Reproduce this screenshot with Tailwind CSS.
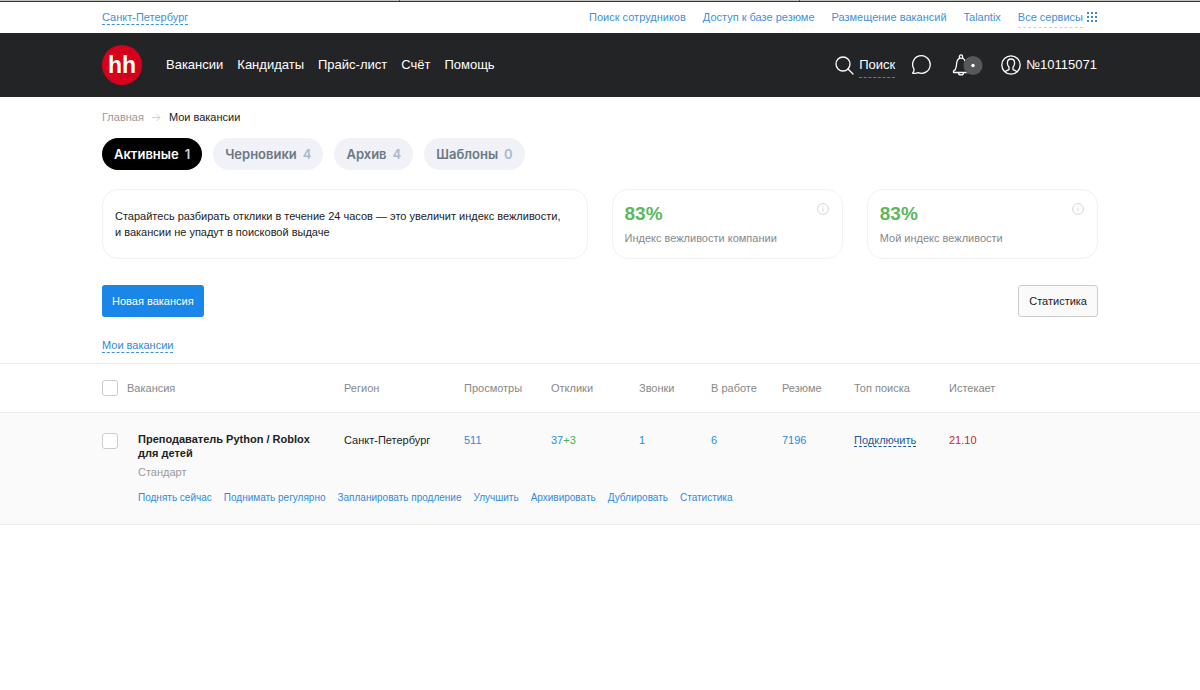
<!DOCTYPE html>
<html lang="ru">
<head>
<meta charset="utf-8">
<meta name="viewport" content="width=device-width, initial-scale=1">
<title>Мои вакансии</title>
<script src="https://cdn.jsdelivr.net/npm/@tailwindcss/browser@4"></script>
</head>
<body class="min-h-screen bg-white font-['Liberation_Sans',Arial,sans-serif] text-[11px] leading-4 text-[#222]">
<div class="flex h-[2px] border-b border-[#333] bg-[#c4c4c0]">
  <span class="w-1/3 border-r border-[#666]"></span><span class="w-1/3 border-r border-[#666]"></span>
</div>

<div class="mx-auto flex h-[31px] max-w-[996px] items-center justify-between pb-px text-[#4090d9]">
  <a href="#" class="border-b border-dashed border-[#4090d9] pt-px leading-[14px]">Санкт-Петербург</a>
  <nav class="flex items-center gap-[17px]">
    <a href="#">Поиск сотрудников</a>
    <a href="#">Доступ к базе резюме</a>
    <a href="#">Размещение вакансий</a>
    <a href="#">Talantix</a>
    <a href="#" class="flex items-center gap-1">
      <span class="border-b border-dashed border-[#bcd6ee] pt-[3px] pb-[2px]">Все сервисы</span>
      <svg class="size-[11px]" viewBox="0 0 11 11" fill="#4389bd" aria-hidden="true"><path d="M0 0h2v2H0zM4 0h2v2H4zM8 0h2v2H8zM0 4h2v2H0zM4 4h2v2H4zM8 4h2v2H8zM0 8h2v2H0zM4 8h2v2H4zM8 8h2v2H8z"/></svg>
    </a>
  </nav>
</div>

<header class="bg-[#232426] text-white">
  <div class="mx-auto flex h-16 max-w-[996px] items-center justify-between text-[13px]">
    <div class="flex items-center gap-6">
      <a href="#" aria-label="hh" class="flex size-10 items-center justify-center rounded-full bg-[#d6001c] pb-px text-[23px] font-bold">hh</a>
      <nav class="flex gap-[14px]">
        <a href="#">Вакансии</a><a href="#">Кандидаты</a><a href="#">Прайс-лист</a><a href="#">Счёт</a><a href="#">Помощь</a>
      </nav>
    </div>
    <div class="flex items-center pr-px">
      <a href="#" class="flex items-center gap-[5px]">
        <svg class="size-[19px]" viewBox="0 0 19 19" fill="none" stroke="#fff" stroke-width="1.3" stroke-linecap="round" aria-hidden="true"><circle cx="8" cy="8" r="7"/><path d="M13 13l5 5"/></svg>
        <span class="border-b border-dashed border-[#777] py-1">Поиск</span>
      </a>
      <button type="button" aria-label="Чат" class="ml-4 pb-px">
        <svg class="size-[21px]" viewBox="0 0 21 21" fill="none" stroke="#fff" stroke-width="1.3" stroke-linejoin="round" aria-hidden="true"><path d="M1.500 19.200c1.300-1.300 1.700-2.700 1.500-4A8.800 8.800 0 1 1 7.300 18.700C5.500 19.500 3.500 19.600 1.500 19.200z"/></svg>
      </button>
      <button type="button" aria-label="Уведомления" class="ml-5 pb-px">
        <svg class="h-[24px] w-[31px]" viewBox="0 0 31 24" fill="none" stroke="#fff" stroke-width="1.3" stroke-linejoin="round" aria-hidden="true"><path d="M1.500 19.500h14v-1.400c-1.500-1.200-2-2.400-2-5V10.500c0-3-1.500-5.400-4.500-5.400S4.900 7.500 4.600 10.500L4.300 13.500c-.3 2.600-1.100 3.600-2.800 4.600z"/><path d="M7.400 5.200V3.500a1.600 1.600 0 0 1 3.200 0v1.700M6.500 19.700c0 3 5 3 5 0"/><circle cx="21" cy="12.500" r="9.500" fill="#57585a" stroke="none"/><circle cx="21" cy="12.500" r="1.700" fill="#fff" stroke="none"/></svg>
      </button>
      <a href="#" class="ml-[18px] flex items-center gap-[5px]">
        <svg class="size-5" viewBox="0 0 20 20" fill="none" stroke="#fff" stroke-width="1.300" stroke-linejoin="round" aria-hidden="true"><circle cx="10" cy="10" r="9.200"/><path d="M4 16.800c.8-1.300 2.300-1.500 4-2.200v-2.300C6.800 11 6.200 9.500 6.400 7.600 6.500 5.200 7.900 4 10 4s3.500 1.200 3.600 3.600c.2 1.900-.4 3.400-1.600 4.700v2.300c1.700.7 3.200.9 4 2.200"/></svg>
        <span>№10115071</span>
      </a>
    </div>
  </div>
</header>

<main>
  <div class="mx-auto max-w-[996px] pt-3">
    <nav aria-label="Навигация" class="flex items-center gap-2">
      <a href="#" class="text-[#999]">Главная</a>
      <svg class="size-[9px]" viewBox="0 0 9 9" fill="none" stroke="#d0d0d0" aria-hidden="true"><path d="M0 4.500h8M4.500 1L8 4.500 4.500 8"/></svg>
      <span>Мои вакансии</span>
    </nav>

    <div class="mt-[13px] flex gap-[11px] font-[Inter,sans-serif] text-[13px] font-semibold text-[#6a7883]">
      <button type="button" class="flex h-8 items-center gap-[6px] rounded-full bg-black px-3 text-white">Активные <span class="text-[#c5d3e6]">1</span></button>
      <button type="button" class="flex h-8 items-center gap-[6px] rounded-full bg-[#f1f2f8] px-3">Черновики <span class="text-[#aab9cb]">4</span></button>
      <button type="button" class="flex h-8 items-center gap-[6px] rounded-full bg-[#f1f2f8] px-3">Архив <span class="text-[#aab9cb]">4</span></button>
      <button type="button" class="flex h-8 items-center gap-[6px] rounded-full bg-[#f1f2f8] px-3">Шаблоны <span class="text-[#aab9cb]">0</span></button>
    </div>

    <div class="mt-[19px] grid grid-cols-[485fr_231fr_231fr] gap-6">
      <section class="flex items-center rounded-2xl border border-[#f1f1f1] px-3">
        <p>Старайтесь разбирать отклики в течение 24 часов — это увеличит индекс вежливости,<br>и вакансии не упадут в поисковой выдаче</p>
      </section>
      <section class="flex justify-between rounded-2xl border border-[#f1f1f1] py-3 pr-[13px] pl-3">
        <div>
          <p class="text-[19px] leading-6 font-bold text-[#5cb85c]">83%</p>
          <p class="mt-1 text-[#888]">Индекс вежливости компании</p>
        </div>
        <button type="button" aria-label="Подробнее" class="self-start pt-px"><svg class="size-3" viewBox="0 0 12 12" fill="none" stroke="#d5d5d5" aria-hidden="true"><circle cx="6" cy="6" r="5.400"/><path d="M6 5.300v3.200M6 3.300v1.200"/></svg></button>
      </section>
      <section class="flex justify-between rounded-2xl border border-[#f1f1f1] py-3 pr-[13px] pl-3">
        <div>
          <p class="text-[19px] leading-6 font-bold text-[#5cb85c]">83%</p>
          <p class="mt-1 text-[#888]">Мой индекс вежливости</p>
        </div>
        <button type="button" aria-label="Подробнее" class="self-start pt-px"><svg class="size-3" viewBox="0 0 12 12" fill="none" stroke="#d5d5d5" aria-hidden="true"><circle cx="6" cy="6" r="5.400"/><path d="M6 5.300v3.200M6 3.300v1.200"/></svg></button>
      </section>
    </div>

    <div class="mt-[26px] flex justify-between">
      <button type="button" class="h-8 rounded-[3px] bg-[#1a86e8] px-[10px] text-white">Новая вакансия</button>
      <button type="button" class="h-8 rounded-[3px] border border-[#ccc] bg-[#fafafa] px-[10px]">Статистика</button>
    </div>
    <div class="mt-[22px] flex pb-[10px]"><a href="#" class="border-b border-dashed border-[#4090d9] leading-[13px] text-[#3088d8]">Мои вакансии</a></div>
  </div>

  <table class="w-full table-fixed border-collapse text-left">
    <colgroup>
      <col><col class="w-[242px]"><col class="w-[120px]"><col class="w-[87px]"><col class="w-[88px]"><col class="w-[72px]"><col class="w-[71px]"><col class="w-[72px]"><col class="w-[95px]"><col class="w-[149px]"><col>
    </colgroup>
    <thead class="border-y border-[#ececec] text-[#888]">
      <tr class="h-[49px] *:p-0 *:font-normal">
        <td></td>
        <th><label class="flex items-center gap-[9px]"><input type="checkbox" class="size-4 appearance-none rounded-[3px] border border-[#ccc] bg-white">Вакансия</label></th>
        <th>Регион</th><th>Просмотры</th><th>Отклики</th><th>Звонки</th><th>В работе</th><th>Резюме</th><th>Топ поиска</th><th>Истекает</th>
        <td></td>
      </tr>
    </thead>
    <tbody class="border-b border-[#ececec] bg-[#fafafa] text-[#2f8ae0]">
      <tr class="align-top *:px-0 *:pt-[19px] *:pb-0">
        <td></td>
        <td>
          <div class="flex gap-5">
            <input type="checkbox" aria-label="Выбрать вакансию" class="mt-px size-4 appearance-none rounded-[3px] border border-[#ccc] bg-white">
            <div>
              <a href="#" class="block leading-[14px] font-bold text-[#222]">Преподаватель Python / Roblox<br>для детей</a>
              <p class="mt-1 text-[#999]">Стандарт</p>
            </div>
          </div>
        </td>
        <td class="text-[#222]">Санкт-Петербург</td>
        <td><a href="#">511</a></td>
        <td><a href="#">37<span class="text-[#4caf50]">+3</span></a></td>
        <td><a href="#">1</a></td>
        <td><a href="#">6</a></td>
        <td><a href="#">7196</a></td>
        <td><a href="#" class="border-b border-dashed border-[#1b5a9c] text-[#1b5a9c]">Подключить</a></td>
        <td class="text-[#c62828]">21.10</td>
        <td></td>
      </tr>
      <tr>
        <td></td>
        <td colspan="9" class="pt-[10px] pb-[18px] pl-9 text-[10px] leading-4">
          <div class="flex gap-3">
            <a href="#">Поднять сейчас</a><a href="#">Поднимать регулярно</a><a href="#">Запланировать продление</a><a href="#">Улучшить</a><a href="#">Архивировать</a><a href="#">Дублировать</a><a href="#">Статистика</a>
          </div>
        </td>
        <td></td>
      </tr>
    </tbody>
  </table>
</main>
</body>
</html>
